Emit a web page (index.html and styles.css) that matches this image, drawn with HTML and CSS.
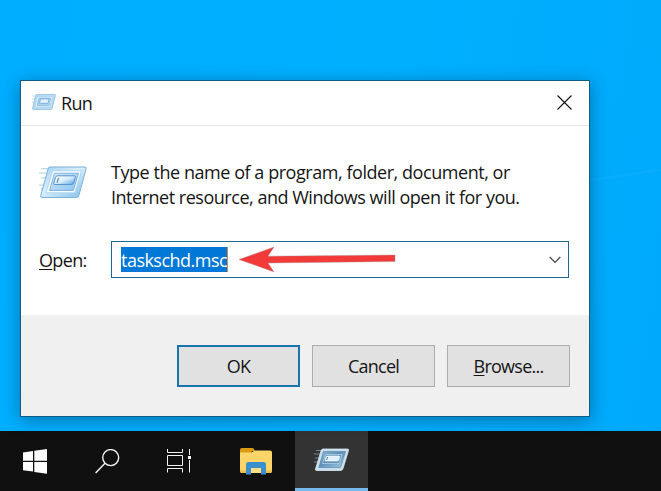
FILE: index.html
```html
<!DOCTYPE html>
<html lang="en">
<head>
<meta charset="utf-8">
<title>Run</title>
<link rel="stylesheet" href="styles.css">
</head>
<body>
<svg class="defs" width="0" height="0" aria-hidden="true">
  <defs>
    <linearGradient id="frame" x1="0" y1="0" x2="1" y2="1">
      <stop offset="0" stop-color="#9fd0f2"/><stop offset=".45" stop-color="#d9effc"/><stop offset="1" stop-color="#7fbdea"/>
    </linearGradient>
    <linearGradient id="panel" x1="0" y1="0" x2="1" y2="1">
      <stop offset="0" stop-color="#d3eafb"/><stop offset="1" stop-color="#8cc4f0"/>
    </linearGradient>
    <linearGradient id="pill" x1="0" y1="0" x2="1" y2="1">
      <stop offset="0" stop-color="#fff"/><stop offset=".5" stop-color="#d9edfc"/><stop offset="1" stop-color="#4d9fe4"/>
    </linearGradient>
    <linearGradient id="glass" x1="0" y1="0" x2="1" y2="1">
      <stop offset="0" stop-color="#8fb9d6"/><stop offset=".45" stop-color="#5d91b8"/><stop offset="1" stop-color="#a5cce6"/>
    </linearGradient>
    <symbol id="run" viewBox="0 0 48 32" preserveAspectRatio="none">
      <path d="M2 2.500h9M0 7h9M2 11.500h6M0 18.500h5M2 22h3" stroke="#bcd9ea" stroke-width="1.200"/>
      <path d="M11.500 1h34q2 0 1.500 2l-7 25q-.7 2.500-3 2.500H3.500q-2.300 0-1.700-2L9 3q.6-2 2.500-2z" fill="url(#frame)" stroke="#7fb2d8" stroke-width="1"/>
      <path d="M13.500 4.500h29l-6.500 21.500H7z" fill="#f7fcff" stroke="#9ccaea" stroke-width=".7"/>
      <path d="M15.500 7H39.500L34.500 23.700H10.500z" fill="url(#panel)" stroke="#6ca8d8" stroke-width=".8"/>
      <path d="M18.300 9.500h17q1.500 0 1 1.500l-1.700 5.500q-.5 1.500-2 1.500H15.800q-1.500 0-1-1.500l1.800-5.500q.5-1.500 1.700-1.500z" fill="url(#pill)" stroke="#4a8cc4" stroke-width=".9"/>
      <path d="M19.500 11.500l-1.500 4.800" stroke="#367dbb"/>
    </symbol>
    <symbol id="run-mini" viewBox="0 0 24 16">
      <path d="M0 2h3M0 5h3M0 8h2" stroke="#c2dfef"/>
      <path d="M4.500.5h18.200q1 0 .7 1l-3.300 12.800q-.2 1.200-1.400 1.200H1.300q-1 0-.7-1.200L3.500 1.500q.2-1 1-1z" fill="#b9dcf3" stroke="#8dbddd" stroke-width=".8"/>
      <path d="M5.500 2.500h15.300L18 13H2.800z" fill="#e9f6fd" stroke="#9ecbe8" stroke-width=".6"/>
      <path d="M7 4h11.800L17 11.500H5z" fill="#a8d2f0" stroke="#79b0d8" stroke-width=".6"/>
      <path d="M8.500 5h8.500l-1 4.300H7.500z" fill="#e4f3fd" stroke="#6aa5d4" stroke-width=".7"/>
    </symbol>
  </defs>
</svg>

<main class="desktop">
  <svg class="rays" viewBox="0 0 661 431" aria-hidden="true">
    <path d="M590 179L661 168v3l-71 11z" fill="#3ac4ff" opacity=".12"/>
  </svg>
  <section class="dialog">
    <header class="titlebar">
      <svg class="run-small"><use href="#run-mini"/></svg>
      <span class="title">Run</span>
      <svg class="close" viewBox="0 0 15 15"><path d="M.5.5l14 14M14.500.5l-14 14" fill="none" stroke="#111" stroke-width="1.100"/></svg>
    </header>
    <div class="content">
      <div class="intro">
        <svg class="run-large"><use href="#run"/></svg>
        <p class="message"><span class="line-one">Type the name of a program, folder, document, or</span><br><span class="line-two">Internet resource, and Windows will open it for you.</span></p>
      </div>
      <div class="open-row">
        <span class="label"><u>O</u>pen:</span>
        <div class="combo">
          <span class="selection">taskschd.msc</span>
          <svg class="arrow" viewBox="0 0 158 26"><path d="M1 13.500L36 1l-6 9.200 127-1.200v6.500L30 17l6 9z" fill="#f23a39" stroke="#a78c8c" stroke-width=".4"/></svg>
          <svg class="chevron" viewBox="0 0 12 8"><path d="M.7 1l5.300 5.300L11.300 1" fill="none" stroke="#444" stroke-width="1.200"/></svg>
        </div>
      </div>
    </div>
    <footer class="actions">
      <div class="button primary"><span class="ok">OK</span></div>
      <div class="button"><span class="cancel">Cancel</span></div>
      <div class="button"><span class="browse"><u>B</u>rowse...</span></div>
    </footer>
  </section>
</main>

<nav class="taskbar">
  <div class="task start">
    <svg width="24" height="25" viewBox="0 0 24 25"><path d="M0 3.500L10 2v9.800H0zM11.300 1.800L24 0v11.800H11.300zM0 13h10v9.500L0 21.200zM11.300 13H24v11.800l-12.700-1.900z" fill="#fff"/></svg>
  </div>
  <div class="task search">
    <svg width="25" height="25" viewBox="0 0 25 25"><circle cx="15.700" cy="8.600" r="8" fill="none" stroke="#f2f2f2" stroke-width="1.400"/><path d="M10 14.300L.6 24" stroke="#f2f2f2" stroke-width="1.500"/></svg>
  </div>
  <div class="task view">
    <svg width="25" height="24" viewBox="0 0 25 24"><path d="M.5 0v3.500h15V0M.5 6.500h15v10h-15zM.5 23.500v-4h15v4M22.500 0v6M22.500 11v12.500" fill="none" stroke="#f2f2f2"/><path d="M21 7h3v3h-3z" fill="#fff"/></svg>
  </div>
  <div class="task files">
    <svg width="32" height="27" viewBox="0 0 32 27">
      <path d="M0 4V2Q0 0 2 0h10q1.500 0 2 1l1 2h-3l-1 2H0z" fill="#dc9a13"/>
      <path d="M0 4.500h10.500q1.500 0 2.500-1t2.500-1H30q2 0 2 2V23q0 2-2 2H2q-2 0-2-2z" fill="#fbd568"/>
      <path d="M0 23q0 2 2 2h28q2 0 2-2v-.8H0z" fill="#efbd49"/>
      <path d="M6 26.500V16.500q0-2.500 2.500-2.500h15q2.500 0 2.500 2.500v10h-5V20H11v6.500z" fill="#3a91cd"/>
      <path d="M11 20h10v5H11z" fill="#ffdf83"/>
    </svg>
  </div>
  <div class="task active">
    <svg width="36" height="24" viewBox="0 0 36 24">
      <path d="M2 2.500h6M0 6h6M1 10h4M0 14h4" stroke="#73818c" stroke-width="1.200"/>
      <path d="M9 1h24.500q1.500 0 1 1.500l-5.500 18q-.5 2-2.500 2H3q-2 0-1.500-1.500l5.500-18Q7.500 1 9 1z" fill="#c6deed" stroke="#dcebf4" stroke-width=".8"/>
      <path d="M9.500 3.500h22l-5 16H4.800z" fill="url(#glass)" stroke="#547f9f" stroke-width=".6"/>
      <path d="M11.500 6.500H28l-3 9H8.500z" fill="#5f91b7" stroke="#bddaed" stroke-width=".7"/>
      <path d="M13 8h12q1 0 .7 1l-1 3q-.3 1-1.400 1H11.800q-1 0-.8-1l1-3q.2-1 1-1z" fill="#deeffa" stroke="#fff" stroke-width=".6"/>
      <path d="M13.500 9l-.9 3" stroke="#4c7b9f"/>
    </svg>
  </div>
</nav>
</body>
</html>
```
FILE: styles.css
```css
* { box-sizing: border-box; }

body {
  margin: 0;
  width: 661px;
  height: 491px;
  overflow: hidden;
  display: flex;
  flex-direction: column;
  font-family: "Open Sans", "Noto Sans", sans-serif;
  font-size: 18px;
  color: #151515;
}

svg { display: block; flex: none; }
.defs { position: absolute; }

.desktop {
  position: relative;
  height: 431px;
  padding: 80px 0 0 20px;
  background: linear-gradient(100deg, #00aeff 0%, #00b0ff 55%, #00a9fb 100%);
}

.rays { position: absolute; inset: 0; width: 661px; height: 431px; }

.dialog {
  position: relative;
  width: 570px;
  height: 337px;
  display: flex;
  flex-direction: column;
  background: #fff;
  border: 1px solid #0d5d85;
  box-shadow: 0 3px 16px rgba(0, 35, 65, .42);
}

.titlebar {
  height: 45px;
  display: flex;
  align-items: center;
  padding: 0 17px 0 11px;
  border-bottom: 1px solid #e6e6e6;
}
.run-small { width: 24px; height: 16px; margin-top: -3px; }
.title { margin-left: 5px; flex: 1; line-height: 24px; letter-spacing: -.7px; margin-top: -1px; }
.close { width: 15px; height: 15px; margin-top: -1px; }

.content { height: 189px; padding: 34px 20px 0 18px; }
.intro { display: flex; height: 81px; }
.run-large { width: 48px; height: 33px; margin-top: 6px; }
.message { margin: 0 0 0 24px; line-height: 25px; white-space: nowrap; }
.line-one { letter-spacing: -.45px; }
.line-two { letter-spacing: -.48px; }

.open-row { display: flex; align-items: center; }
.label { width: 72px; letter-spacing: -.65px; padding-top: 1px; }
u { text-decoration-thickness: 1px; text-underline-offset: 2px; }

.combo {
  position: relative;
  width: 458px;
  height: 37px;
  display: flex;
  align-items: center;
  justify-content: space-between;
  padding: 0 7px 0 9px;
  border: 1px solid #1b699b;
}
.selection {
  width: 107px;
  height: 25px;
  line-height: 26px;
  margin-top: -1px;
  overflow: hidden;
  color: #fff;
  background: #0078d7;
  border-right: 1px solid #d98843;
  letter-spacing: -.52px;
}
.arrow { position: absolute; left: 126px; top: 4px; width: 158px; height: 26px; }
.chevron { width: 12px; height: 8px; }

.actions {
  height: 101px;
  display: flex;
  gap: 12px;
  justify-content: flex-end;
  padding: 30px 19px 0 0;
  background: #f0f0f0;
}
.button {
  width: 123px;
  height: 42px;
  display: flex;
  align-items: center;
  justify-content: center;
  background: #e1e1e1;
  border: 1px solid #adadad;
  letter-spacing: -.75px;
}
.primary { border: 2px solid #1874ad; }

.taskbar { height: 60px; display: flex; background: #101010; }
.task { display: flex; align-items: center; justify-content: center; }
.start { width: 70px; }
.search { width: 74px; }
.view { width: 73px; padding-right: 2px; }
.files { width: 78px; }
.active { width: 73px; background: #333; border-bottom: 3px solid #76b9ed; }
```
